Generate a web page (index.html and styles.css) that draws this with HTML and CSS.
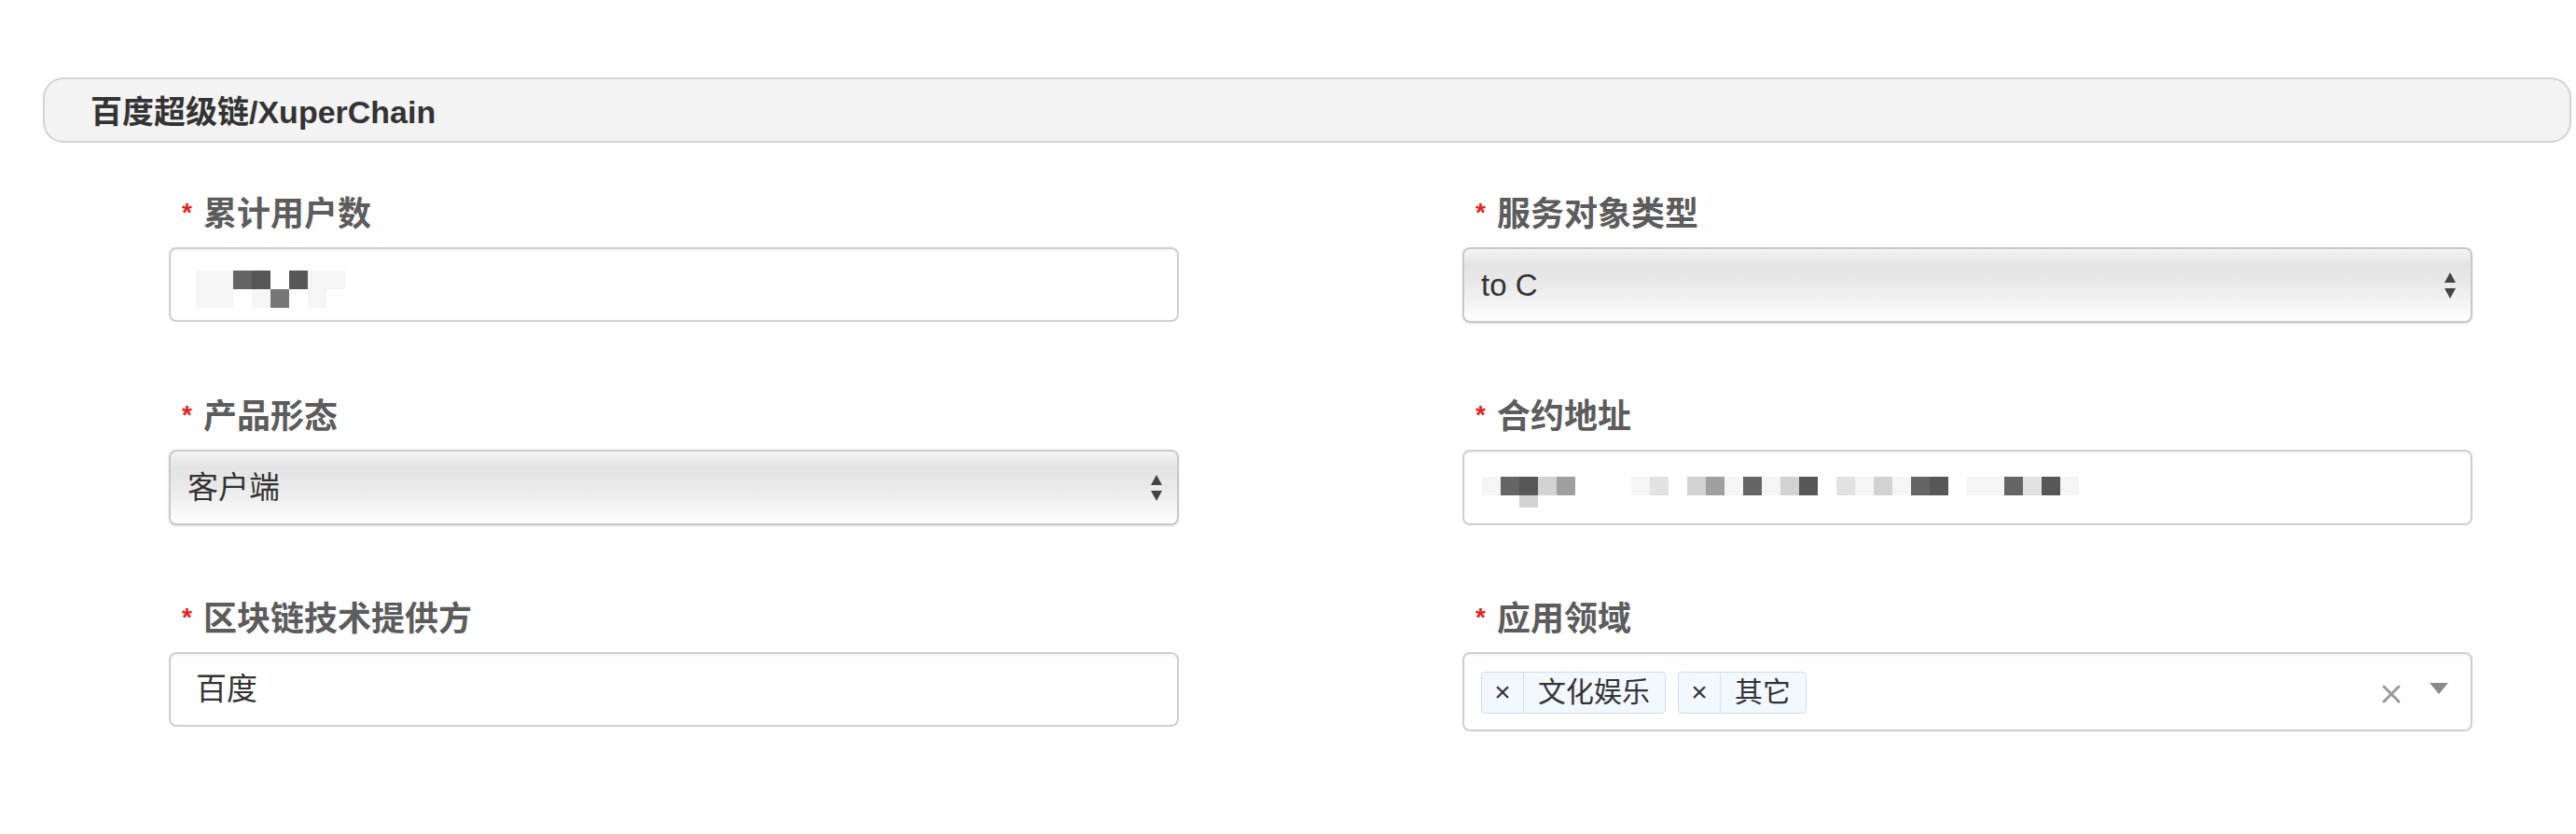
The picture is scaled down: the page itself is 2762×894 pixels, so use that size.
FILE: index.html
```html
<!DOCTYPE html>
<html lang="zh-CN">
<head>
<meta charset="utf-8">
<title>百度超级链/XuperChain</title>
<link rel="stylesheet" href="styles.css">
</head>
<body>
<div class="header"><span class="title">百度超级链/XuperChain</span></div>
<div class="form">
  <div class="group">
    <div class="label"><span class="req">*</span>累计用户数</div>
    <div class="control text">
      <div class="mosaic mosaic-users" aria-hidden="true">
        <div class="mrow"><i class="m1"></i><i class="m1"></i><i class="m6"></i><i class="m7"></i><i class="m0"></i><i class="m7"></i><i class="m1"></i><i class="m1"></i></div>
        <div class="mrow"><i class="m1"></i><i class="m1"></i><i class="m0"></i><i class="m1"></i><i class="m5"></i><i class="m0"></i><i class="m1"></i><i class="m0"></i></div>
      </div>
    </div>
  </div>
  <div class="group">
    <div class="label"><span class="req">*</span>服务对象类型</div>
    <div class="control select">
      <span class="value latin">to C</span>
      <svg class="arrows" width="12" height="28" viewBox="0 0 12 28"><path d="M6 0 L12 11 L0 11 Z" fill="#444"/><path d="M0 17 L12 17 L6 28 Z" fill="#444"/></svg>
    </div>
  </div>
  <div class="group">
    <div class="label"><span class="req">*</span>产品形态</div>
    <div class="control select">
      <span class="value">客户端</span>
      <svg class="arrows" width="12" height="28" viewBox="0 0 12 28"><path d="M6 0 L12 11 L0 11 Z" fill="#444"/><path d="M0 17 L12 17 L6 28 Z" fill="#444"/></svg>
    </div>
  </div>
  <div class="group">
    <div class="label"><span class="req">*</span>合约地址</div>
    <div class="control text text-narrow">
      <div class="mosaic mosaic-addr" aria-hidden="true">
        <div class="mrow"><i class="m1"></i><i class="m6"></i><i class="m7"></i><i class="m3"></i><i class="m4"></i><i class="m0"></i><i class="m0"></i><i class="m0"></i><i class="m1"></i><i class="m2"></i><i class="m0"></i><i class="m3"></i><i class="m4"></i><i class="m1"></i><i class="m6"></i><i class="m1"></i><i class="m3"></i><i class="m7"></i><i class="m0"></i><i class="m2"></i><i class="m1"></i><i class="m3"></i><i class="m1"></i><i class="m6"></i><i class="m7"></i><i class="m0"></i><i class="m1"></i><i class="m1"></i><i class="m6"></i><i class="m2"></i><i class="m7"></i><i class="m1"></i></div>
        <div class="mrow mrow-short"><i class="m0"></i><i class="m0"></i><i class="m3"></i></div>
      </div>
    </div>
  </div>
  <div class="group">
    <div class="label"><span class="req">*</span>区块链技术提供方</div>
    <div class="control text">
      <span class="value">百度</span>
    </div>
  </div>
  <div class="group">
    <div class="label"><span class="req">*</span>应用领域</div>
    <div class="control multi">
      <div class="tags">
        <div class="tag"><span class="tag-x">×</span><span class="tag-text">文化娱乐</span></div>
        <div class="tag"><span class="tag-x">×</span><span class="tag-text">其它</span></div>
      </div>
      <svg class="clear" width="22" height="22" viewBox="0 0 22 22"><path d="M3 3 L19 19 M19 3 L3 19" stroke="#999999" stroke-width="3" stroke-linecap="round"/></svg>
      <svg class="caret" width="20" height="12" viewBox="0 0 20 12"><path d="M0 0 L20 0 L10 12 Z" fill="#8a8a8a"/></svg>
    </div>
  </div>
</div>
</body>
</html>
```

FILE: styles.css
```css
html, body {
  margin: 0;
  padding: 0;
  background: #ffffff;
}

body {
  font-family: "Liberation Sans", "Noto Sans CJK SC", sans-serif;
  color: #333333;
}

.header {
  box-sizing: border-box;
  height: 70px;
  margin: 83px 5px 0 46px;
  border: 2px solid #d3d3d3;
  border-radius: 22px;
  background: #f3f3f3;
  display: flex;
  align-items: center;
  padding: 4px 0 0 49px;
}

.title {
  font-size: 34px;
  font-weight: 700;
  color: #333333;
  line-height: 40px;
}

.form {
  display: grid;
  grid-template-columns: 1083px 1083px;
  column-gap: 304px;
  row-gap: 81px;
  margin: 57px 0 0 181px;
}

.group {
  display: flex;
  flex-direction: column;
}

.label {
  height: 40px;
  line-height: 40px;
  padding-left: 14px;
  margin-bottom: 15px;
  font-size: 36px;
  font-weight: 700;
  color: #5c5c5c;
  white-space: nowrap;
}

.req {
  color: #e0261d;
  font-size: 28px;
  margin-right: 12px;
  position: relative;
  top: -5px;
}

.control {
  box-sizing: border-box;
  height: 80px;
  border: 2px solid #cfcfcf;
  border-radius: 8px;
  display: flex;
  align-items: center;
}

.text {
  background: #ffffff;
  padding-left: 27px;
  box-shadow: inset 0 2px 3px rgba(0, 0, 0, 0.05);
}

.text-narrow {
  padding-left: 19px;
  height: 81px;
}

.select {
  height: 81px;
  justify-content: space-between;
  padding: 0 14px 0 18px;
  border-color: #c9c9c9;
  background: linear-gradient(to bottom, #f3f3f3 0%, #e4e4e4 22%, #e9e9e9 50%, #f6f6f6 80%, #ffffff 100%);
  box-shadow: 0 1px 2px rgba(0, 0, 0, 0.15);
}

.value {
  font-size: 33px;
  color: #333333;
  line-height: 40px;
}

.arrows {
  display: block;
  margin-right: 2px;
}

.mosaic {
  display: flex;
  flex-direction: column;
}

.mosaic-users {
  margin-top: 10px;
}

.mosaic-addr {
  margin-top: 10px;
}

.mrow {
  display: flex;
  height: 20px;
}

.mrow-short {
  height: 13px;
}

.mrow i {
  display: block;
  width: 20px;
  height: 100%;
}

.m0 { background: #ffffff; }
.m1 { background: #f5f5f5; }
.m2 { background: #e2e2e2; }
.m3 { background: #d2d2d2; }
.m4 { background: #9f9f9f; }
.m5 { background: #777777; }
.m6 { background: #656565; }
.m7 { background: #575757; }

.multi {
  height: 85px;
  background: #ffffff;
  padding: 0 24px 0 18px;
  box-shadow: inset 0 2px 3px rgba(0, 0, 0, 0.05);
}

.tags {
  flex: 1;
  display: flex;
  gap: 13px;
  margin-top: 1px;
}

.tag {
  box-sizing: border-box;
  height: 45px;
  display: flex;
  align-items: stretch;
  border: 1.5px solid #c9dcf1;
  border-radius: 4px;
  background: #f3f8fe;
}

.tag-x {
  box-sizing: border-box;
  width: 45px;
  display: flex;
  align-items: center;
  justify-content: center;
  border-right: 1.5px solid #cfe0f3;
  font-size: 30px;
  color: #333333;
}

.tag-text {
  padding: 0 16px 0 15px;
  font-size: 30px;
  line-height: 42px;
  color: #333333;
}

.clear {
  display: block;
  margin: 5px 30px 0 0;
}

.caret {
  display: block;
  margin-bottom: 8px;
}
```
